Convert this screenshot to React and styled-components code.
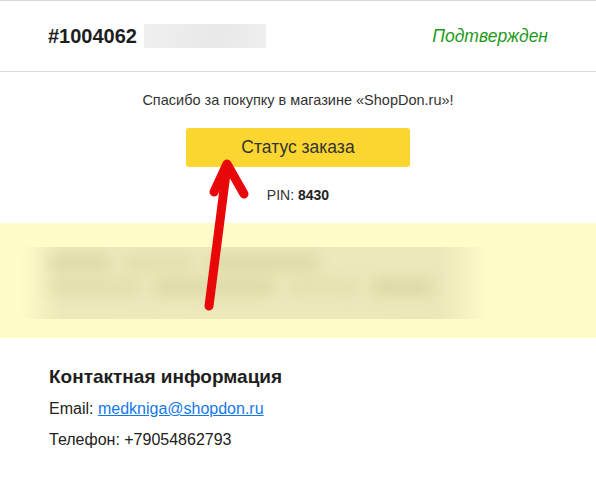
import React from 'react';
import styled, { createGlobalStyle } from 'styled-components';

const GlobalStyle = createGlobalStyle`
  html, body {
    margin: 0;
    padding: 0;
    background: #fff;
  }

  body {
    font-family: 'Liberation Sans', Arial, sans-serif;
    color: #222;
  }

  *, *::after, *::before {
    box-sizing: border-box;
  }
`;

const Page = styled.div`
  position: relative;
  width: 596px;
  height: 484px;
  overflow: hidden;
`;

const Header = styled.div`
  display: flex;
  align-items: center;
  justify-content: space-between;
  height: 72px;
  padding: 0 48px 0 48px;
  border-top: 1px solid #d8d8d8;
  border-bottom: 1px solid #dcdcdc;
`;

const OrderTitle = styled.div`
  display: flex;
  align-items: center;
  gap: 7px;
  font-size: 20px;
  font-weight: bold;
  color: #1e1e1e;
`;

const Hidden = styled.span`
  display: block;
  width: 122px;
  height: 24px;
  background: linear-gradient(100deg, #f0f0f0, #e8e8e8 60%, #efefef);
`;

const Status = styled.span`
  font-size: 17.5px;
  font-style: italic;
  color: #1f9a1a;
`;

const Intro = styled.div`
  display: flex;
  flex-direction: column;
  align-items: center;
  padding: 20px 0 0;
  height: 151px;
`;

const Thanks = styled.p`
  margin: 0;
  font-size: 14.5px;
  color: #333;
`;

const StatusButton = styled.a`
  display: flex;
  align-items: center;
  justify-content: center;
  width: 224px;
  height: 39px;
  margin-top: 20px;
  background: #fbd630;
  border-radius: 3px;
  font-size: 17.5px;
  color: #333;
  text-decoration: none;
`;

const Pin = styled.p`
  margin: 20px 0 0;
  font-size: 14px;
  color: #333;

  b {
    color: #222;
  }
`;

const Notice = styled.div`
  height: 115px;
  background: #fefdc9;
  padding: 24px 0 0 20px;
`;

const BlurFrame = styled.div`
  width: 470px;
  height: 72px;
  overflow: hidden;
  background: linear-gradient(90deg, #fefdc9 0, #ede9bb 40px, #ece8ba 420px, #fefdc9 470px);
`;

const Blurred = styled.div`
  display: flex;
  flex-direction: column;
  gap: 8px;
  padding: 8px 0 0 30px;
  filter: blur(7px);
`;

const BlurLine = styled.div`
  display: flex;
  gap: 14px;
`;

const BlurWord = styled.span`
  display: block;
  height: 16px;
  width: ${p => p.$w}px;
  background: ${p => p.$c || '#ddd9a8'};
`;

const Contacts = styled.div`
  padding: 28px 49px 0;
`;

const ContactTitle = styled.h3`
  margin: 0 0 12px;
  font-size: 19px;
  font-weight: bold;
  color: #1e1e1e;
`;

const ContactRow = styled.p`
  margin: 0 0 13px;
  font-size: 16px;
  color: #222;

  a {
    color: #1479e8;
  }
`;

const Arrow = styled.svg`
  position: absolute;
  left: 195px;
  top: 150px;
`;

export default function App() {
  return (
    <>
      <GlobalStyle />
      <Page>
        <Header>
          <OrderTitle>
            #1004062
            <Hidden />
          </OrderTitle>
          <Status>Подтвержден</Status>
        </Header>
        <Intro>
          <Thanks>Спасибо за покупку в магазине «ShopDon.ru»!</Thanks>
          <StatusButton href="#">Статус заказа</StatusButton>
          <Pin>PIN: <b>8430</b></Pin>
        </Intro>
        <Notice>
          <BlurFrame>
            <Blurred>
              <BlurLine>
                <BlurWord $w={60} />
                <BlurWord $w={70} $c="#e2deae" />
                <BlurWord $w={110} />
              </BlurLine>
              <BlurLine>
                <BlurWord $w={90} $c="#e2deae" />
                <BlurWord $w={120} />
                <BlurWord $w={70} $c="#e4e0b0" />
                <BlurWord $w={60} $c="#dcd8a6" />
              </BlurLine>
            </Blurred>
          </BlurFrame>
        </Notice>
        <Contacts>
          <ContactTitle>Контактная информация</ContactTitle>
          <ContactRow>
            Email: <a href="#">medkniga@shopdon.ru</a>
          </ContactRow>
          <ContactRow>Телефон: +79054862793</ContactRow>
        </Contacts>
        <Arrow width="60" height="170" viewBox="0 0 60 170">
          <g stroke="#e8080a" strokeWidth="9" strokeLinecap="round" strokeLinejoin="round" fill="none">
            <line x1="14" y1="156" x2="32" y2="16" />
            <polyline points="19,42 32,14 49,44" />
          </g>
        </Arrow>
      </Page>
    </>
  );
}
